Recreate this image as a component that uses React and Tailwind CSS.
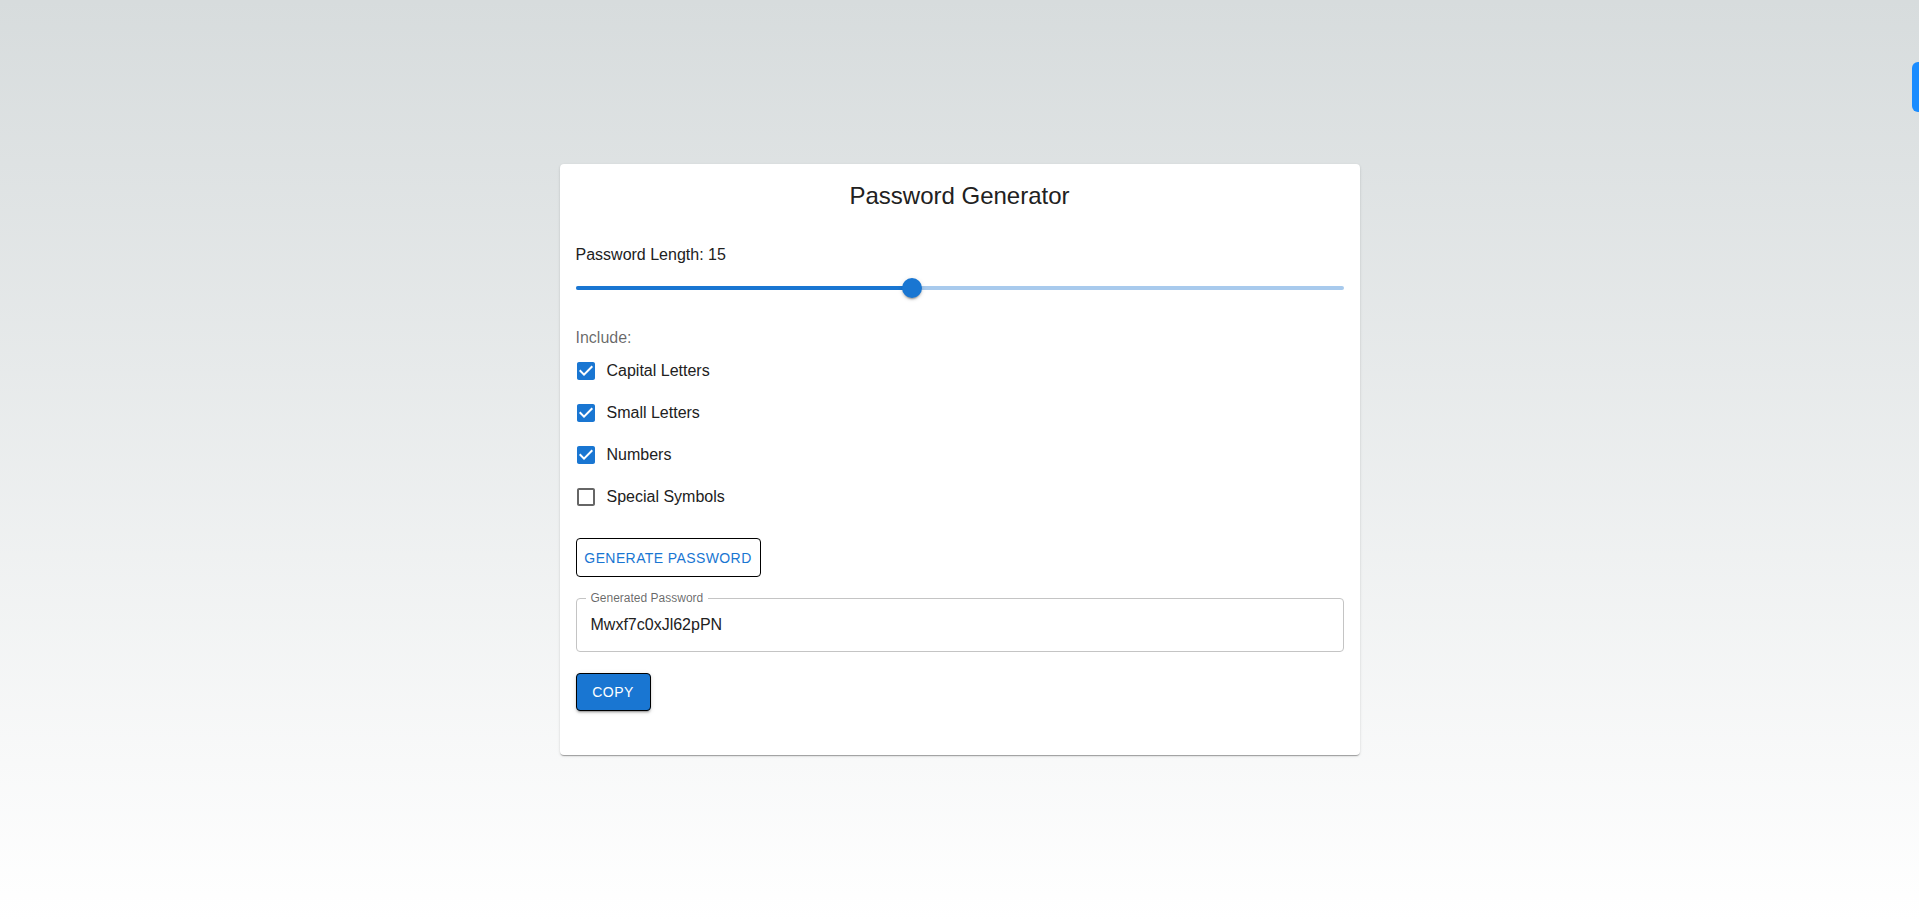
import React, { useState } from 'react';

const CheckedIcon = () => (
    <svg viewBox="0 0 24 24" className="w-6 h-6 fill-[#1976d2]">
        <path d="M19 3H5c-1.11 0-2 .9-2 2v14c0 1.1.89 2 2 2h14c1.11 0 2-.9 2-2V5c0-1.1-.89-2-2-2zm-9 14l-5-5 1.41-1.41L10 14.17l7.59-7.59L19 8l-9 9z" />
    </svg>
);

const UncheckedIcon = () => (
    <svg viewBox="0 0 24 24" className="w-6 h-6 fill-[rgba(0,0,0,0.6)]">
        <path d="M19 5v14H5V5h14m0-2H5c-1.1 0-2 .9-2 2v14c0 1.1.9 2 2 2h14c1.1 0 2-.9 2-2V5c0-1.1-.9-2-2-2z" />
    </svg>
);

const Option = ({ label, checked, onToggle }) => (
    <label className="flex items-center h-[42px] -ml-[11px] cursor-pointer" onClick={onToggle}>
        <span className="p-[9px] flex">{checked ? <CheckedIcon /> : <UncheckedIcon />}</span>
        <span className="text-base text-[#212121]">{label}</span>
    </label>
);

const App = () => {
    const [length] = useState(15);
    const [opts, setOpts] = useState({ capital: true, small: true, numbers: true, symbols: false });
    const min = 8;
    const max = 24;
    const pct = ((length - min) / (max - min)) * 100;

    const toggle = (k) => setOpts({ ...opts, [k]: !opts[k] });

    return (
        <div
            className="relative min-h-screen flex justify-center pt-[164px] bg-gradient-to-b from-[#d7dcdd] to-white"
            style={{ fontFamily: '"Liberation Sans", Arial, sans-serif' }}
        >
            <div className="absolute right-0 top-[62px] w-[7px] h-[50px] rounded-l-md bg-[#1a8cff]" />

            <div className="w-[800px] h-[591px] bg-white rounded shadow-[0_2px_1px_-1px_rgba(0,0,0,0.2),0_1px_1px_0_rgba(0,0,0,0.14),0_1px_3px_0_rgba(0,0,0,0.12)] px-4 pt-4 flex flex-col">
                <h1 className="text-2xl leading-8 text-center text-[#212121]">Password Generator</h1>

                <p className="mt-[31px] text-base leading-6 text-[#212121]">Password Length: {length}</p>

                <div className="relative h-[30px] mt-[6px] flex items-center">
                    <div className="w-full h-1 rounded-full bg-[#a8caed]" />
                    <div className="absolute left-0 h-1 rounded-full bg-[#1976d2]" style={{ width: `${pct}%` }} />
                    <div
                        className="absolute w-5 h-5 -ml-[10px] rounded-full bg-[#1976d2] shadow-[0_3px_1px_-2px_rgba(0,0,0,0.2),0_2px_2px_0_rgba(0,0,0,0.14),0_1px_5px_0_rgba(0,0,0,0.12)]"
                        style={{ left: `${pct}%` }}
                    />
                </div>

                <p className="mt-[23px] text-base leading-6 text-[rgba(0,0,0,0.6)]">Include:</p>
                <div className="flex flex-col">
                    <Option label="Capital Letters" checked={opts.capital} onToggle={() => toggle('capital')} />
                    <Option label="Small Letters" checked={opts.small} onToggle={() => toggle('small')} />
                    <Option label="Numbers" checked={opts.numbers} onToggle={() => toggle('numbers')} />
                    <Option label="Special Symbols" checked={opts.symbols} onToggle={() => toggle('symbols')} />
                </div>

                <button className="mt-5 w-[185px] h-[39px] border border-black rounded text-sm uppercase tracking-[0.02857em] text-[#1976d2] bg-white">
                    Generate Password
                </button>

                <div className="relative mt-[21px] h-[54px] border border-[#c4c4c4] rounded flex items-center px-[14px]">
                    <span className="absolute -top-[8px] left-[9px] px-[5px] bg-white text-xs leading-[15px] text-[rgba(0,0,0,0.6)]">
                        Generated Password
                    </span>
                    <span className="text-base text-[#212121]">Mwxf7c0xJl62pPN</span>
                </div>

                <button className="mt-[21px] w-[75px] h-[38px] border border-black rounded bg-[#1976d2] text-white text-sm uppercase tracking-[0.02857em] shadow-[0_3px_1px_-2px_rgba(0,0,0,0.2),0_2px_2px_0_rgba(0,0,0,0.14),0_1px_5px_0_rgba(0,0,0,0.12)]">
                    Copy
                </button>
            </div>
        </div>
    );
};

export default App;
